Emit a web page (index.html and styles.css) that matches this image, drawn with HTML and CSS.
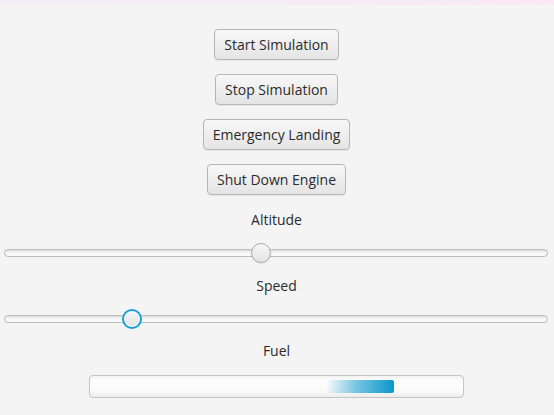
FILE: index.html
```html
<!DOCTYPE html>
<html>
<head>
<meta charset="utf-8">
<link rel="stylesheet" href="styles.css">
</head>
<body>
<div class="titlebar"></div>
<main class="panel">
  <button class="btn btn-first">Start Simulation</button>
  <button class="btn">Stop Simulation</button>
  <button class="btn">Emergency Landing</button>
  <button class="btn">Shut Down Engine</button>

  <div class="label label-altitude">Altitude</div>
  <input class="slider slider-altitude" type="range" min="0" max="100" step="0.1" value="47.2">

  <div class="label label-speed">Speed</div>
  <input class="slider slider-speed focused" type="range" min="0" max="100" step="0.1" value="22.4">

  <div class="label label-fuel">Fuel</div>
  <div class="progress">
    <div class="progress-bar" style="margin-left:232px;width:68px"></div>
  </div>
</main>
</body>
</html>
```
FILE: styles.css
```css
html, body {
  margin: 0;
  padding: 0;
  background: #f4f4f4;
  width: 554px;
  height: 415px;
  overflow: hidden;
  font-family: "Open Sans", "Noto Sans", sans-serif;
  color: #333333;
}

.titlebar {
  height: 5px;
  background: linear-gradient(to right, #f3eff7, #f9e9f4);
}

.panel {
  display: flex;
  flex-direction: column;
  align-items: center;
  padding-top: 24px;
  padding-right: 1px;
}

.btn {
  height: 31px;
  margin-top: 14px;
  padding: 0 9px;
  font-family: "Open Sans", "Noto Sans", sans-serif;
  font-size: 14px;
  color: #2b2b2b;
  border: 1px solid #b6b6b6;
  border-radius: 4px;
  background: linear-gradient(to bottom, #f8f8f8, #e4e4e4);
  box-shadow: 0 1px 1px rgba(0, 0, 0, 0.06);
}

.btn-first {
  margin-top: 0;
}

.label {
  height: 20px;
  line-height: 20px;
  font-size: 14px;
  color: #2b2b2b;
}

.label-altitude { margin-top: 15px; }
.label-speed { margin-top: 13px; }
.label-fuel { margin-top: 12px; }

.slider {
  -webkit-appearance: none;
  appearance: none;
  align-self: stretch;
  margin: 0 5px 0 4px;
  height: 20px;
  background: transparent;
  padding: 0;
}

.slider-altitude { margin-top: 13px; }
.slider-speed { margin-top: 13px; }

.slider::-webkit-slider-runnable-track {
  height: 8px;
  border-radius: 4px;
  border: 1px solid #bcbcbc;
  box-sizing: border-box;
  background: linear-gradient(to bottom, #dcdcdc 0%, #f6f6f6 45%, #fbfbfb 100%);
}

.slider::-webkit-slider-thumb {
  -webkit-appearance: none;
  appearance: none;
  width: 20px;
  height: 20px;
  margin-top: -7px;
  border-radius: 50%;
  box-sizing: border-box;
  border: 1px solid #a8a8a8;
  background: linear-gradient(to bottom, #f7f7f7, #e3e3e3);
  box-shadow: 0 1px 1px rgba(0, 0, 0, 0.08);
}

.slider.focused::-webkit-slider-thumb {
  border: 2px solid #1a9fd6;
  box-shadow: inset 0 0 0 1px #ffffff;
  background: linear-gradient(to bottom, #f5f5f5, #e3e3e3);
}

.progress {
  margin-top: 14px;
  width: 375px;
  height: 23px;
  box-sizing: border-box;
  border: 1px solid #c4c4c4;
  border-radius: 4px;
  background: linear-gradient(to bottom, #f3f3f3 0%, #fdfdfd 25%, #fafafa 70%, #ececec 100%);
  padding: 4px;
  display: flex;
}

.progress-bar {
  height: 13px;
  border-radius: 2px;
  background: linear-gradient(to right, rgba(8, 152, 204, 0) 0%, rgba(8, 152, 204, 0.55) 45%, #0a97cb 100%);
}
```
